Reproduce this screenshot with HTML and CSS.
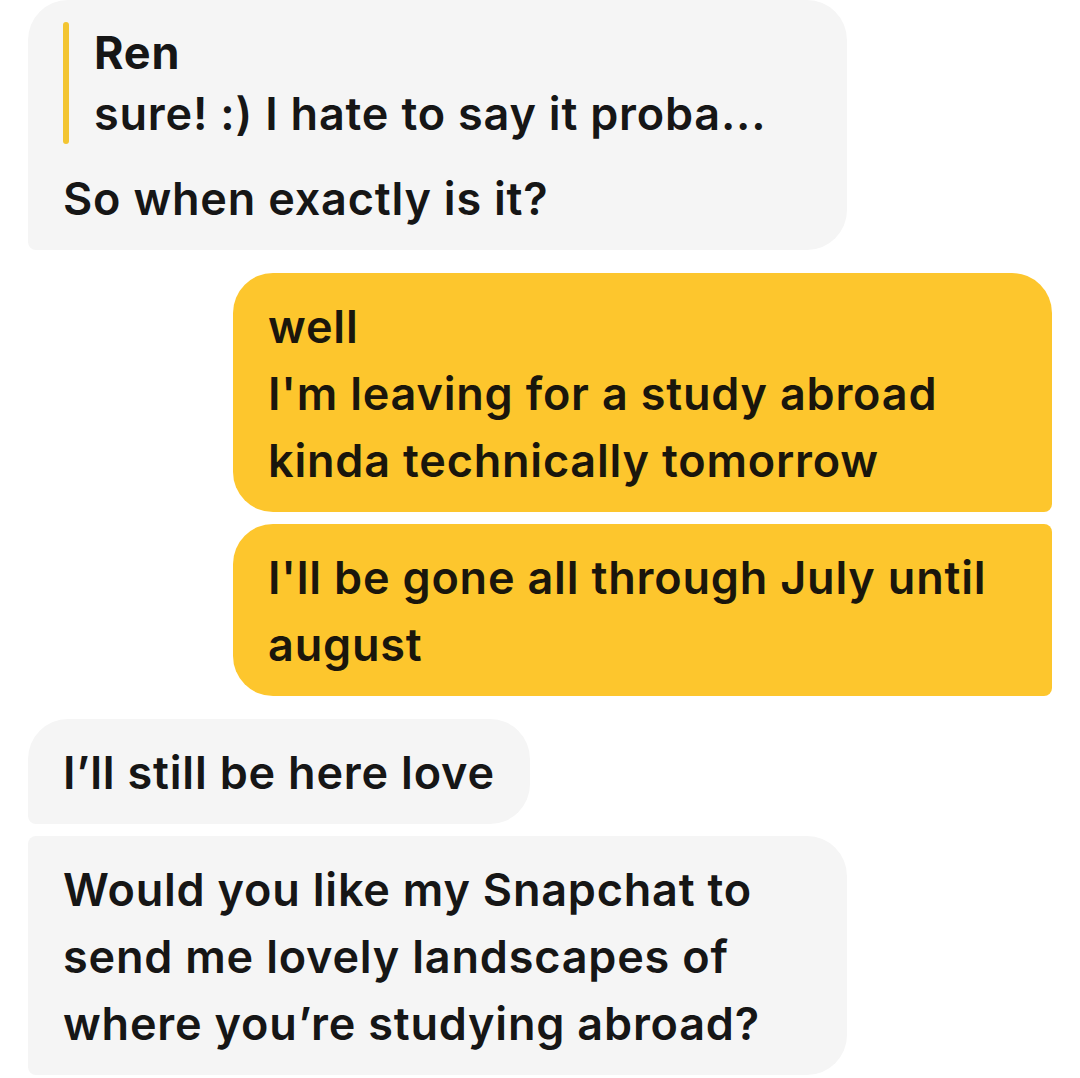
FILE: index.html
```html
<!DOCTYPE html>
<html lang="en">
<head>
    <meta charset="UTF-8">
    <meta name="viewport" content="width=device-width, initial-scale=1.0">
    <title>Chat</title>
    <link rel="stylesheet" href="styles.css">
</head>
<body>
    <div class="chat">
        <div class="group">
            <div class="bubble them first wide">
                <div class="quote">
                    <span class="quote-bar"></span>
                    <div class="quote-body">
                        <div class="quote-name">Ren</div>
                        <div class="quote-text">sure! :) I hate to say it proba...</div>
                    </div>
                </div>
                <div class="text">So when exactly is it?</div>
            </div>
        </div>

        <div class="group">
            <div class="bubble me first">
                <div class="text">well<br>I'm leaving for a study abroad<br>kinda technically tomorrow</div>
            </div>
            <div class="bubble me last">
                <div class="text">I'll be gone all through July until<br>august</div>
            </div>
        </div>

        <div class="group">
            <div class="bubble them first">
                <div class="text">I’ll still be here love</div>
            </div>
            <div class="bubble them last wide">
                <div class="text">Would you like my Snapchat to<br>send me lovely landscapes of<br>where you’re studying abroad?</div>
            </div>
        </div>
    </div>
</body>
</html>
```

FILE: styles.css
```css
body {
    margin: 0;
    background-color: #ffffff;
    font-family: Inter, "Noto Sans", sans-serif;
    color: #161616;
}

.chat {
    display: flex;
    flex-direction: column;
    gap: 23px;
    padding: 0 28px;
}

.group {
    display: flex;
    flex-direction: column;
    gap: 12px;
}

.bubble {
    box-sizing: border-box;
    max-width: 819px;
    padding: 20px 35px 18px;
    font-size: 45px;
    font-weight: 600;
    line-height: 67px;
    letter-spacing: 0.8px;
}

.bubble.wide {
    width: 819px;
}

.them {
    align-self: flex-start;
    background-color: #f5f5f5;
    border-radius: 8px 40px 40px 8px;
}

.them.first {
    border-top-left-radius: 40px;
}

.me {
    align-self: flex-end;
    width: 819px;
    background-color: #fdc62d;
    color: #1a160c;
    border-radius: 40px 8px 8px 40px;
}

.me.first {
    border-top-right-radius: 40px;
}

.quote {
    display: flex;
    gap: 25px;
    padding-top: 2px;
    margin-bottom: 21px;
    line-height: 61px;
}

.quote-bar {
    width: 6px;
    flex-shrink: 0;
    border-radius: 3px;
    background-color: #f3c531;
}

.quote-name {
    font-weight: 700;
}
```
